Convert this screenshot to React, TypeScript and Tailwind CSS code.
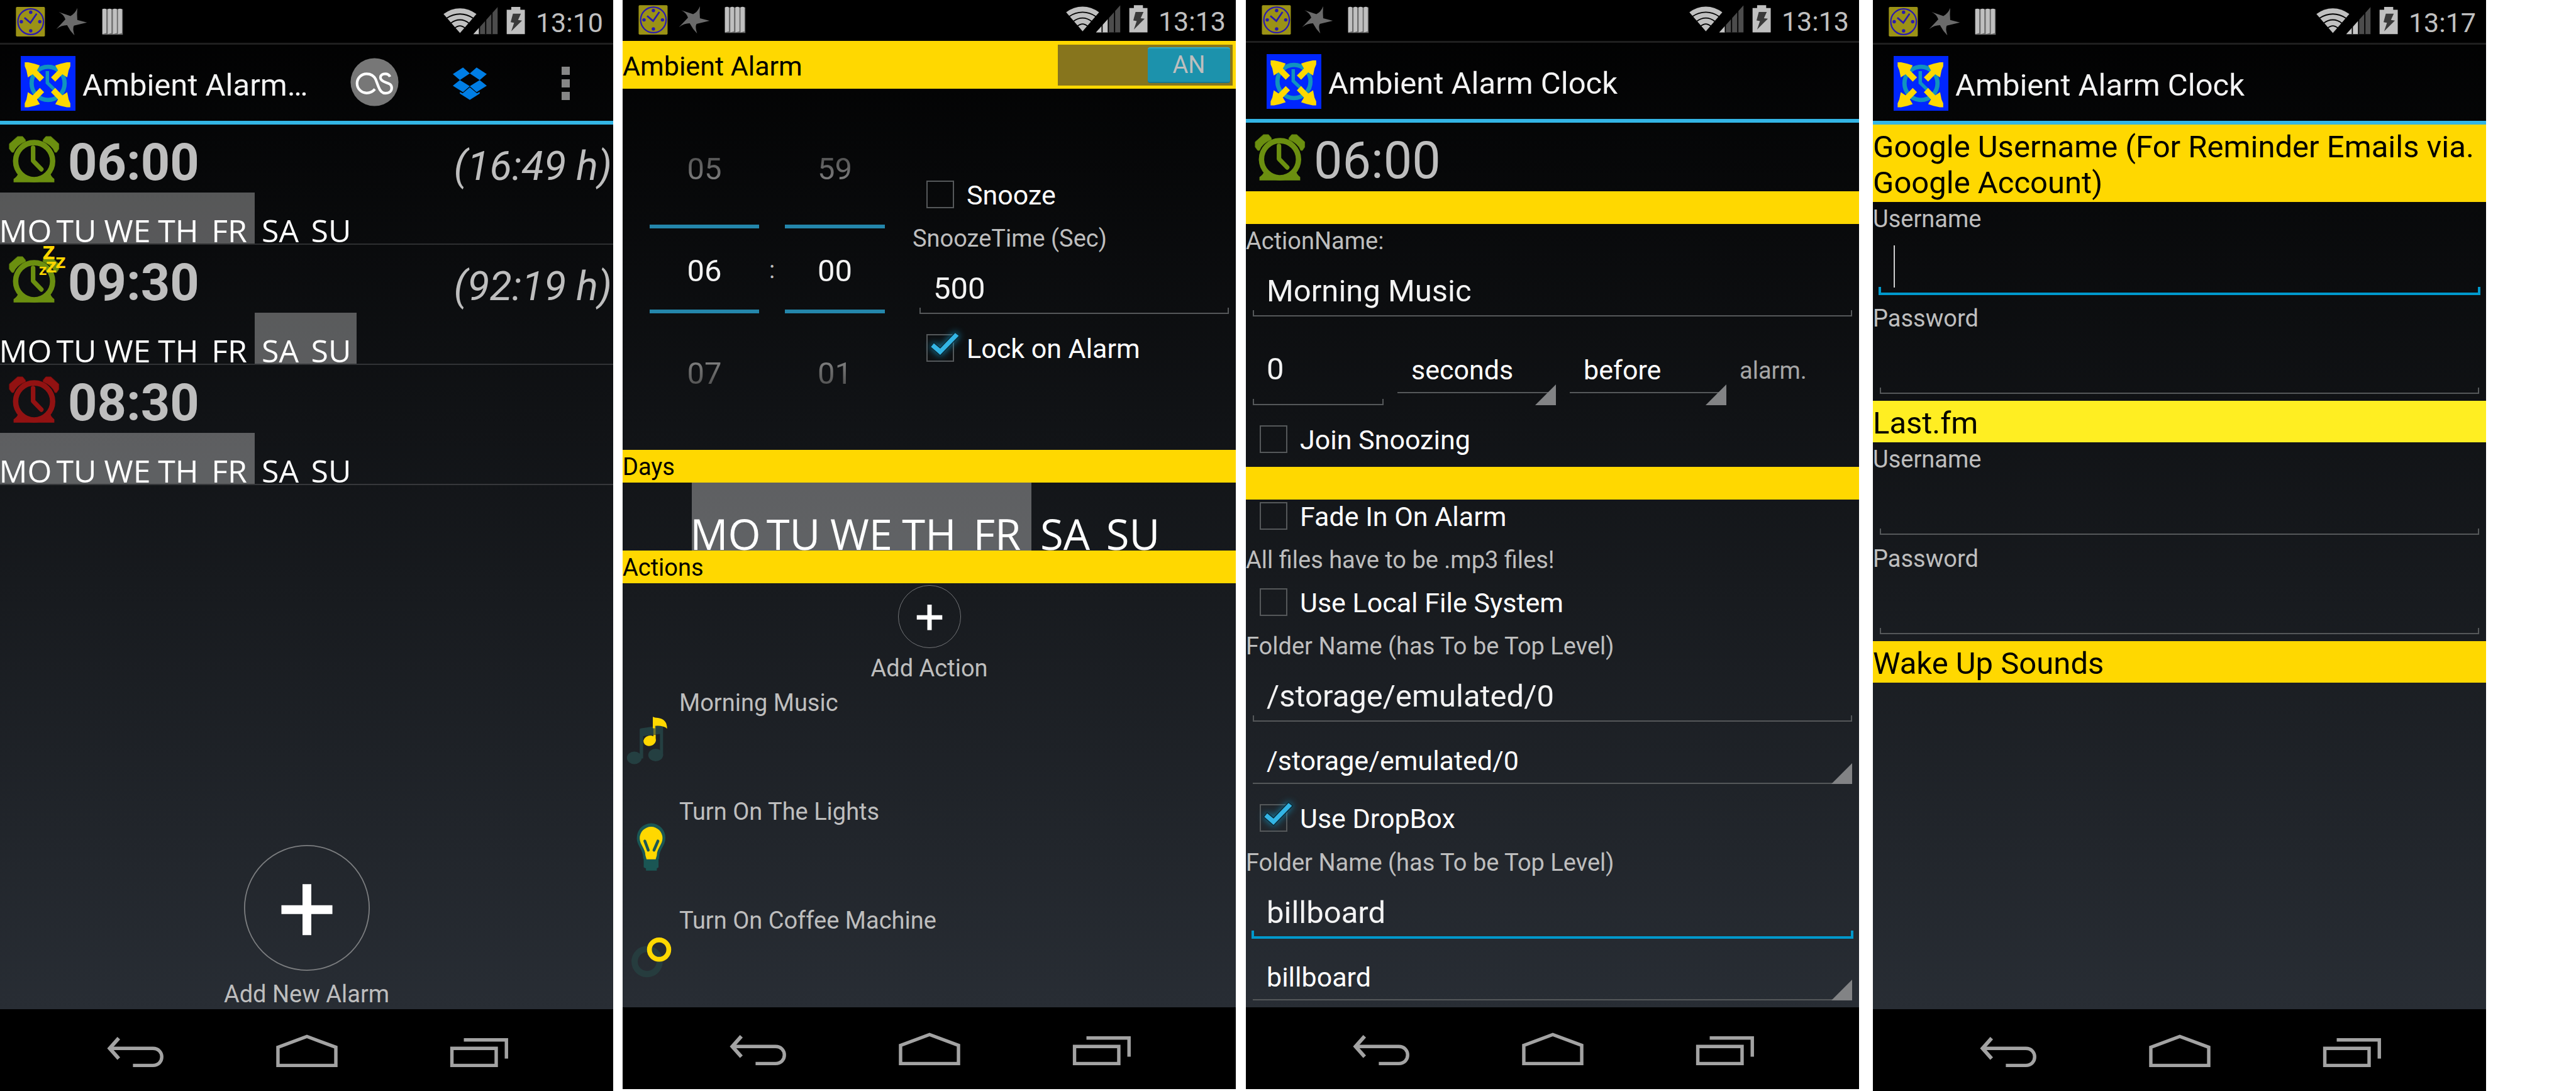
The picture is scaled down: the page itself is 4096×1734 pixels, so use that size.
import React, { useState } from "react";

/* ---------- drawings ---------- */

function NotificationIcons({ raised }: { raised?: boolean }) {
  return (
    <svg
      className={raised ? "h-[65px] w-[217px]" : "h-[68px] w-[217px]"}
      viewBox={raised ? "0 3 240 72" : "0 0 240 75"}
      aria-hidden="true"
    >
      <rect x="28" y="12" width="51" height="52" rx="2" fill="#9b9216" />
      <circle cx="54" cy="38" r="22.500" fill="none" stroke="#2a1ab0" strokeWidth="2.500" />
      <path d="M43 31 L53.500 40 L64.500 24" fill="none" stroke="#2a1ab0" strokeWidth="3" />
      <g fill="#2a1ab0">
        <circle cx="54" cy="21.500" r="3" />
        <circle cx="54" cy="54" r="3" />
        <circle cx="37.500" cy="38" r="3" />
        <circle cx="70" cy="38" r="3" />
      </g>
      <path
        d="M103 21 L124 28 Q132 24 136 14 Q135 26 136 35 L153 39.500 L130 45 Q127 50 131 62 Q123 54 118 44 Q108 44 99 51 L115 34 Q112 25 103 21 Z"
        fill="#6a6a6a"
      />
      <rect x="180" y="16" width="36" height="45" fill="#6a6a6a" />
      <g fill="#c0c0c0">
        <path d="M180 16 Q184 14 187 16 V58 L180 60 Z" />
        <path d="M189.500 16 Q193 14 196 16 V58 L189.500 60 Z" />
        <path d="M198.500 16 Q202 14 205.500 16 V58 L198.500 60 Z" />
        <path d="M207.500 16 Q211 14 214.500 16 V58 L207.500 60 Z" />
      </g>
    </svg>
  );
}

function SystemIcons({ raised, bars }: { raised?: boolean; bars: number }) {
  return (
    <svg
      className={raised ? "h-[65px] w-[148px]" : "h-[68px] w-[148px]"}
      viewBox={raised ? "776 3 164 72" : "776 0 164 75"}
      aria-hidden="true"
    >
      <path d="M809.700 58 L780.700 24.500 Q794 14.500 809.700 14.500 Q825 14.500 838.700 24.500 Z" fill="#c0c0c0" />
      <g fill="none" stroke="#000" strokeWidth="2">
        <path d="M786 32 Q797 24.500 809.700 24.500 Q822 24.500 833 32" />
        <path d="M793 41 Q801 34.700 809.700 34.700 Q818 34.700 826 41" />
        <path d="M800 49.500 Q805 45.300 809.700 45.300 Q814 45.300 819 49.500" />
      </g>
      <path d="M833.300 60 L876 60 L876 12.300 Z" fill="#4c4c4c" />
      <path
        d={bars === 1 ? "M833.300 60 L843.500 60 L843.500 48.600 Z" : "M833.300 60 L854.500 60 L854.500 36.300 Z"}
        fill="#c6c6c6"
      />
      <path d="M844 60 V40 M855 60 V28 M866 60 V16" stroke="#000" strokeWidth="2" />
      <path d="M900 12 H916 V17 H924 V60 H892 V17 H900 Z" fill="#c0c0c0" />
      <path d="M903 24 H917 L912 35 L919 36 L900 55 L905 40 L899 39 Z" fill="#3a3a3a" />
    </svg>
  );
}

function AppIcon() {
  const arrow = "M7 11 H13 L24 13.500 L33.500 16.500 L28.500 25 L41 37.500 L33.500 45 L21 32 L12.500 37.500 L10 25 L7 18 Z";
  return (
    <svg className="size-[87px] shrink-0" viewBox="0 0 96 96" aria-hidden="true">
      <rect width="96" height="96" fill="#0026ff" />
      <circle cx="48" cy="48" r="29" fill="none" stroke="#1093bf" strokeWidth="7.500" />
      <path d="M46.700 26.500 V47 L60 60" fill="none" stroke="#1093bf" strokeWidth="6" />
      <g fill="#ffd800">
        <path d={arrow} />
        <path d={arrow} transform="translate(94 0) scale(-1 1)" />
        <path d={arrow} transform="translate(0 101) scale(1 -1)" />
        <path d={arrow} transform="translate(94 101) scale(-1 -1)" />
      </g>
    </svg>
  );
}

function AlarmIcon({ color, edge, snooze }: { color: string; edge: string; snooze?: boolean }) {
  return (
    <svg className="size-[108px] shrink-0" viewBox="0 0 120 120" aria-hidden="true">
      <g fill={color} stroke={edge} strokeWidth="1">
        <path d="M31 21 H40 L45 27 V30 Q29 36 24 49 H21 L16.500 43 V34 Z" />
        <path d="M90 21 H81 L76 27 V30 Q92 36 97 49 H100 L104 43 V34 Z" />
      </g>
      <path d="M33 84 Q31 92 24 96 V102 H96 V96 Q90 92 88 84 A32.500 32.500 0 0 1 33 84 Z" fill={color} />
      <circle cx="60.300" cy="64.500" r="32.700" fill="none" stroke={color} strokeWidth="9.500" />
      <path
        d="M58.500 41 V64 L73 79"
        fill="none"
        stroke={color}
        strokeWidth="8"
        strokeLinecap="round"
        strokeLinejoin="round"
      />
      {snooze && (
        <g fill="#ffd600" fontFamily="'DejaVu Sans', sans-serif" fontWeight="700">
          <text x="75" y="25" fontSize="31">Z</text>
          <text x="98" y="41" fontSize="25">Z</text>
          <text x="81" y="49" fontSize="26">Z</text>
          <text x="69" y="53" fontSize="19">Z</text>
        </g>
      )}
    </svg>
  );
}

function LastFmIcon() {
  return (
    <svg className="size-[77px]" viewBox="0 0 86 86" aria-hidden="true">
      <circle cx="43" cy="43" r="42.500" fill="#777" />
      <path
        d="M43.700 55.500 C40 60 35 62.300 29 62.300 A17 17 0 0 1 29 28.300 C37 28.300 42 32 45 38 L50 51 C53 59 57 62.700 62 62.700 C69 62.700 73.500 59 73.500 53.500 C73.500 47 69 45.500 63 43.500 C57 41.500 53.500 39.500 53.500 35 C53.500 31 57 28.300 62 28.300 C66 28.300 69 30 70.500 33.500"
        fill="none"
        stroke="#fff"
        strokeWidth="4.700"
      />
    </svg>
  );
}

function DropboxIcon() {
  return (
    <svg className="h-[52px] w-[54px]" viewBox="0 0 60 57" fill="#007ee5" aria-hidden="true">
      <path d="M0 11.500 L18 0 L30 10.500 L12.500 22 Z" />
      <path d="M60 11.500 L42 0 L30 10.500 L47.500 22 Z" />
      <path d="M0 32 L12.500 22 L30 33 L18 43.500 Z" />
      <path d="M60 32 L47.500 22 L30 33 L42 43.500 Z" />
      <path d="M12.500 43 L17.500 45.500 L30 35 L42.500 45.500 L47.500 43 V46 L30 57 L12.500 46 Z" />
    </svg>
  );
}

function PlusCircle({ className }: { className: string }) {
  return (
    <svg className={className} viewBox="0 0 222 222" aria-hidden="true">
      <circle cx="111" cy="111" r="110" fill="none" stroke="#7c7e80" strokeWidth="2" />
      <path d="M111 69 V159 M66 114 H156" stroke="#fff" strokeWidth="15.500" />
    </svg>
  );
}

function MusicIcon() {
  return (
    <svg className="size-[87px]" viewBox="0 0 96 96" aria-hidden="true">
      <g fill="#243f41">
        <ellipse cx="20.500" cy="80" rx="13" ry="11" />
        <ellipse cx="58" cy="75" rx="13" ry="11" />
        <path d="M30 30 Q30 28 33 28 L68 23 Q71 23 71 26 V76 H65.500 V38 L36 42 V81 H30 Z" />
      </g>
      <path d="M53 8 Q56 10 62 10 Q78 12 78 29 Q72 23 57 24 V28 H53 Z" fill="#ffd800" />
      <rect x="54" y="24" width="4" height="18" fill="#ffd800" opacity="0.350" />
      <path d="M54 40 H58 V50 H54 Z" fill="#ffd800" />
      <ellipse cx="47.500" cy="50" rx="11" ry="9" fill="#ffd800" transform="rotate(-15 47.500 50)" />
    </svg>
  );
}

function BulbIcon() {
  return (
    <svg className="size-[87px]" viewBox="0 0 96 96" aria-hidden="true">
      <path
        d="M50 4 A25 25 0 0 1 75 30 C75 43 64 50 64 64 V66 H63 V81 L60 83 V87 H41 V83 L37 81 V66 H36 V64 C36 50 25 43 25 30 A25 25 0 0 1 50 4 Z"
        fill="#1a5654"
      />
      <path
        d="M50 10 A20 20 0 0 1 70 30 C70 41 60 48 60 60 L58 67 H42 L40 60 C40 48 30 41 30 30 A20 20 0 0 1 50 10 Z"
        fill="#ffd800"
      />
      <path d="M39 35 L45 51 M62 35 L55 51" stroke="#1a5654" strokeWidth="5" strokeLinecap="round" />
    </svg>
  );
}

function RingsIcon() {
  return (
    <svg className="size-[87px]" viewBox="0 0 96 96" fill="none" aria-hidden="true">
      <circle cx="43" cy="55.500" r="22" stroke="#263c3e" strokeWidth="11" />
      <circle cx="64" cy="34.500" r="17" stroke="#ffd800" strokeWidth="8.500" />
    </svg>
  );
}

/* ---------- phone frame ---------- */

function StatusBar({ time, bars, raised }: { time: string; bars: number; raised?: boolean }) {
  return (
    <div className="flex items-center justify-between bg-black pr-[16px]">
      <NotificationIcons raised={raised} />
      <div className="flex items-center gap-[3px]">
        <SystemIcons raised={raised} bars={bars} />
        <span className="pt-[3px] text-[43px] leading-[54px] text-[#c0c0c0]">{time}</span>
      </div>
    </div>
  );
}

function ActionBar({ title, children }: { title: string; children?: React.ReactNode }) {
  return (
    <header className="flex h-[130px] items-center border-t-[3px] border-b-[6px] border-t-[#1f1f1f] border-b-[#33b5e5] pt-[2px] pl-[33px]">
      <AppIcon />
      <h1 className="ml-[11px] flex-1 pt-[5px] text-[49px] leading-[57px] whitespace-nowrap text-[#f3f3f3]">{title}</h1>
      {children}
    </header>
  );
}

function NavBar() {
  return (
    <nav className="flex h-[130px] items-center justify-center gap-[128px] bg-black">
      <button type="button" aria-label="Back" className="flex w-[145px] justify-center">
        <svg className="h-[130px] w-[98px]" viewBox="185 1776 108 144" fill="none" stroke="#a3a3a3" strokeWidth="6">
          <path d="M210 1827 L194 1845 L210 1863" strokeWidth="6.500" />
          <path d="M194 1845 H270 C291 1845 291 1875 270 1875 H235" />
        </svg>
      </button>
      <button type="button" aria-label="Home" className="flex w-[145px] justify-center">
        <svg className="h-[130px] w-[98px]" viewBox="486 1776 108 144" fill="none" stroke="#a3a3a3" strokeWidth="6">
          <path d="M489 1843 L540 1824 L591 1843 V1875 H489 Z" />
        </svg>
      </button>
      <button type="button" aria-label="Recent apps" className="flex w-[145px] justify-center">
        <svg className="h-[130px] w-[98px]" viewBox="788 1776 108 144" fill="none" stroke="#a3a3a3" strokeWidth="6">
          <path d="M795 1845 H873 V1875 H795 Z" />
          <path d="M816 1830 H891 V1863" />
        </svg>
      </button>
    </nav>
  );
}

function Phone({ className, children }: { className: string; children: React.ReactNode }) {
  return (
    <section className={`flex min-w-0 flex-1 flex-col ${className}`}>
      <div className="flex flex-1 flex-col bg-linear-to-b/srgb from-black to-[#282d34]">{children}</div>
      <NavBar />
    </section>
  );
}

/* ---------- form parts ---------- */

function Label({ htmlFor, className = "", children }: { htmlFor?: string; className?: string; children: React.ReactNode }) {
  return (
    <label htmlFor={htmlFor} className={`block text-[38px] leading-[54px] text-[#bebebe] ${className}`}>
      {children}
    </label>
  );
}

function Field({
  id,
  label,
  value = "",
  type = "text",
  focused,
  caret,
  deep,
  className = "mx-[11px] mt-[21px]",
}: {
  id: string;
  label?: string;
  value?: string;
  type?: string;
  focused?: boolean;
  caret?: boolean;
  deep?: boolean;
  className?: string;
}) {
  return (
    <div className={`relative flex flex-col ${className}`}>
      <input
        id={id}
        type={type}
        aria-label={label}
        defaultValue={value}
        className={`h-[62px] w-full min-w-0 bg-transparent px-[22px] pt-[2px] text-[49px] text-[#f3f3f3] outline-none ${deep ? "mb-[17px]" : ""}`}
      />
      {caret && <span className="absolute -top-[6px] left-[22px] h-[67px] w-[2px] bg-white/80" />}
      {focused ? (
        <div className="-mx-[2px] -mt-[2px] -mb-[1px] h-[13px] border-x-4 border-b-4 border-[#0099cc]" />
      ) : (
        <div className="h-[10px] border-x-2 border-b-2 border-[#55585a]" />
      )}
    </div>
  );
}

function Spinner({ label, options, className }: { label: string; options: string[]; className: string }) {
  return (
    <div className={`relative ${className}`}>
      <select
        aria-label={label}
        className="block h-[76px] w-full appearance-none border-b-2 border-[#55585a] bg-transparent pt-[4px] pl-[22px] text-[43px] text-white outline-none"
      >
        {options.map((o) => (
          <option key={o}>{o}</option>
        ))}
      </select>
      <svg className="pointer-events-none absolute right-0 bottom-0 size-[33px]" viewBox="0 0 33 33" aria-hidden="true">
        <path d="M33 0 V33 H0 Z" fill="#828385" />
      </svg>
    </div>
  );
}

function Check({ children, checked, className = "" }: { children: React.ReactNode; checked?: boolean; className?: string }) {
  const [on, setOn] = useState(!!checked);
  return (
    <label className={`flex h-[52px] items-center gap-[20px] pl-[22px] ${className}`}>
      <span className="relative size-[44px]">
        <input
          type="checkbox"
          checked={on}
          onChange={() => setOn(!on)}
          className="block size-[44px] appearance-none border-2 border-[#55585a]"
        />
        {on && (
          <svg
            className="pointer-events-none absolute top-0 left-0 size-[44px] overflow-visible drop-shadow-[0_0_6px_#1583a8]"
            viewBox="0 0 48 48"
            aria-hidden="true"
          >
            <path
              d="M8 22 L13 16 L24 25 L50 -2 L56 3 L24 36 Z"
              fill="#33b5e5"
              stroke="#0c2a36"
              strokeWidth="3"
              paintOrder="stroke"
            />
          </svg>
        )}
      </span>
      <span className="pt-[2px] text-[43px] leading-[52px] text-white">{children}</span>
    </label>
  );
}

const DAYS = ["MO", "TU", "WE", "TH", "FR", "SA", "SU"];

function Days({ active, large }: { active: string[]; large?: boolean }) {
  return (
    <div className={large ? "flex justify-center" : "flex"}>
      {DAYS.map((d) => (
        <button
          key={d}
          type="button"
          aria-pressed={active.includes(d)}
          className={`flex items-end justify-center font-['Open_Sans',sans-serif] text-white ${
            large ? "h-[108px] w-[108px] text-[67px] leading-[54px]" : "h-[81px] w-[81px] text-[50px] leading-[41px]"
          } ${active.includes(d) ? "bg-white/32" : ""}`}
        >
          {d}
        </button>
      ))}
    </div>
  );
}

const WEEK = ["MO", "TU", "WE", "TH", "FR"];

/* ---------- screens ---------- */

const ALARMS = [
  { time: "06:00", left: "(16:49 h)", days: WEEK, color: "#6b8f10", edge: "#587a08" },
  { time: "09:30", left: "(92:19 h)", days: ["SA", "SU"], color: "#6b8f10", edge: "#587a08", snooze: true },
  { time: "08:30", left: "", days: WEEK, color: "#921212", edge: "#7a0a0a" },
];

function AlarmList() {
  return (
    <Phone className="mr-[15px]">
      <StatusBar time="13:10" bars={1} />
      <ActionBar title="Ambient Alarm…">
        <button type="button" aria-label="Last.fm" className="flex w-[152px] justify-center pb-[5px]">
          <LastFmIcon />
        </button>
        <button type="button" aria-label="Dropbox" className="flex w-[152px] justify-center">
          <DropboxIcon />
        </button>
        <button type="button" aria-label="More options" className="flex w-[152px] flex-col items-center gap-[7px]">
          <span className="size-[13px] bg-[#868686]" />
          <span className="size-[13px] bg-[#868686]" />
          <span className="size-[13px] bg-[#868686]" />
        </button>
      </ActionBar>
      <ul>
        {ALARMS.map((a) => (
          <li key={a.time} className="border-b-2 border-white/15">
            <div className="flex h-[108px]">
              <AlarmIcon color={a.color} edge={a.edge} snooze={a.snooze} />
              <div className="flex flex-1 items-baseline justify-between pt-[7px] text-[#bebebe]">
                <span className="text-[81px] leading-[108px] font-bold">{a.time}</span>
                <span className="pr-[2px] text-[65px] leading-[90px] whitespace-nowrap italic">{a.left}</span>
              </div>
            </div>
            <Days active={a.days} />
          </li>
        ))}
      </ul>
      <button type="button" className="mt-auto flex flex-col items-center gap-[13px] self-center">
        <PlusCircle className="size-[200px]" />
        <span className="text-[38px] leading-[48px] text-[#bebebe]">Add New Alarm</span>
      </button>
    </Phone>
  );
}

function Wheel({ label, prev, value, next, className }: { label: string; prev: string; value: string; next: string; className: string }) {
  return (
    <div className={`flex flex-col ${className}`}>
      <button type="button" className="flex h-[178px] items-center justify-center text-[49px]">
        <span className="bg-linear-to-b from-[#484848] to-[#8a8a8a] bg-clip-text leading-[57px] text-transparent">{prev}</span>
      </button>
      <div className="border-y-[6px] border-[#2486ab]">
        <input
          aria-label={label}
          defaultValue={value}
          className="block h-[129px] w-full bg-transparent pt-[6px] text-center text-[49px] text-[#f3f3f3] outline-none"
        />
      </div>
      <button type="button" className="flex h-[190px] items-center justify-center text-[49px]">
        <span className="bg-linear-to-b from-[#8a8a8a] to-[#484848] bg-clip-text leading-[57px] text-transparent">{next}</span>
      </button>
    </div>
  );
}

const ACTIONS = [
  { name: "Morning Music", icon: <MusicIcon /> },
  { name: "Turn On The Lights", icon: <BulbIcon /> },
  { name: "Turn On Coffee Machine", icon: <RingsIcon /> },
];

function AlarmEditor() {
  return (
    <Phone className="mr-[16px] mb-[3px]">
      <StatusBar time="13:13" bars={2} raised />
      <div className="flex h-[76px] items-center justify-between bg-[#ffd800] pr-[5px]">
        <h1 className="pt-[4px] text-[43px] leading-[54px] text-black">Ambient Alarm</h1>
        <button type="button" role="switch" aria-checked="true" aria-label="Ambient Alarm" className="flex h-[65px] w-[278px] justify-end bg-[#87751d] p-[4px]">
          <span className="flex h-[57px] w-[131px] items-center justify-center rounded-[4px] border-t-2 border-b-2 border-t-[#35a9c4] border-b-[#16788f] bg-[#1c92ac] text-[38px] text-[#bebebe]">
            AN
          </span>
        </button>
      </div>
      <div className="flex h-[574px] pl-[43px]">
        <div className="flex pt-[38px]">
          <Wheel label="Hour" prev="05" value="06" next="07" className="w-[174px]" />
          <span className="mt-[184px] w-[41px] text-center text-[38px] leading-[133px] text-[#bebebe]">:</span>
          <Wheel label="Minute" prev="59" value="00" next="01" className="w-[159px]" />
        </div>
        <div className="ml-[44px] flex-1 pt-[142px]">
          <Check>Snooze</Check>
          <Label htmlFor="snooze-time" className="mt-[17px]">SnoozeTime (Sec)</Label>
          <Field id="snooze-time" value="500" />
          <Check checked className="mt-[28px]">Lock on Alarm</Check>
        </div>
      </div>
      <h2 className="bg-[#ffd800] pt-[3px] text-[38px] leading-[49px] text-black">Days</h2>
      <Days active={WEEK} large />
      <h2 className="bg-[#ffd800] pt-[3px] text-[38px] leading-[49px] text-black">Actions</h2>
      <button type="button" className="mt-[3px] flex flex-col items-center gap-[5px] self-center">
        <PlusCircle className="size-[100px]" />
        <span className="text-[38px] leading-[54px] text-[#bebebe]">Add Action</span>
      </button>
      <ul className="mt-[3px] flex flex-col gap-[46px]">
        {ACTIONS.map((a) => (
          <li key={a.name} className="flex h-[127px]">
            <div className="w-[90px] self-end">{a.icon}</div>
            <span className="text-[38px] leading-[50px] text-[#bebebe]">{a.name}</span>
          </li>
        ))}
      </ul>
    </Phone>
  );
}

function ActionEditor() {
  return (
    <Phone className="mr-[22px] mb-[3px]">
      <StatusBar time="13:13" bars={1} raised />
      <ActionBar title="Ambient Alarm Clock" />
      <div className="flex h-[109px]">
        <AlarmIcon color="#6b8f10" edge="#587a08" />
        <span className="pt-[7px] text-[81px] leading-[108px] text-[#bebebe]">06:00</span>
      </div>
      <div className="h-[52px] bg-[#ffd800]" />
      <Label htmlFor="action-name">ActionName:</Label>
      <Field id="action-name" value="Morning Music" />
      <div className="mx-[11px] mt-[46px] flex">
        <Field id="offset" label="Offset" value="0" deep className="mt-[6px] w-[208px]" />
        <Spinner label="Unit" options={["seconds", "minutes"]} className="ml-[22px] w-[252px]" />
        <Spinner label="Direction" options={["before", "after"]} className="ml-[22px] w-[249px]" />
        <span className="ml-[21px] text-[38px] leading-[81px] text-[#a6a6a6]">alarm.</span>
      </div>
      <Check className="mt-[28px] mb-[18px]">Join Snoozing</Check>
      <div className="h-[52px] bg-[#ffd800]" />
      <Check>Fade In On Alarm</Check>
      <p className="mt-[17px] text-[38px] leading-[54px] text-[#bebebe]">All files have to be .mp3 files!</p>
      <Check className="mt-[14px]">Use Local File System</Check>
      <Label htmlFor="local-folder" className="mt-[17px]">Folder Name (has To be Top Level)</Label>
      <Field id="local-folder" value="/storage/emulated/0" />
      <Spinner label="Local folder" options={["/storage/emulated/0"]} className="mx-[11px] mt-[23px]" />
      <Check checked className="mt-[28px]">Use DropBox</Check>
      <Label htmlFor="dropbox-folder" className="mt-[18px]">Folder Name (has To be Top Level)</Label>
      <Field id="dropbox-folder" value="billboard" focused />
      <Spinner label="Dropbox folder" options={["billboard"]} className="mx-[11px] mt-[23px]" />
    </Phone>
  );
}

function Settings() {
  return (
    <Phone className="mr-[143px]">
      <StatusBar time="13:17" bars={2} />
      <ActionBar title="Ambient Alarm Clock" />
      <h2 className="bg-[#ffd800] pt-[7px] pb-[2px] text-[49px] leading-[57px] text-black">
        Google Username (For Reminder Emails via. Google Account)
      </h2>
      <Label htmlFor="google-user">Username</Label>
      <Field id="google-user" focused caret />
      <Label htmlFor="google-pass" className="mt-[11px]">Password</Label>
      <Field id="google-pass" type="password" />
      <h2 className="mt-[11px] bg-[#ffee22] pt-[7px] pb-[2px] text-[49px] leading-[57px] text-black">Last.fm</h2>
      <Label htmlFor="lastfm-user">Username</Label>
      <Field id="lastfm-user" />
      <Label htmlFor="lastfm-pass" className="mt-[11px]">Password</Label>
      <Field id="lastfm-pass" type="password" />
      <h2 className="mt-[11px] bg-[#ffd800] pt-[7px] pb-[2px] text-[49px] leading-[57px] text-black">Wake Up Sounds</h2>
    </Phone>
  );
}

export default function App() {
  return (
    <main className="flex min-h-screen w-full bg-white font-['Roboto',sans-serif]">
      <AlarmList />
      <AlarmEditor />
      <ActionEditor />
      <Settings />
    </main>
  );
}
